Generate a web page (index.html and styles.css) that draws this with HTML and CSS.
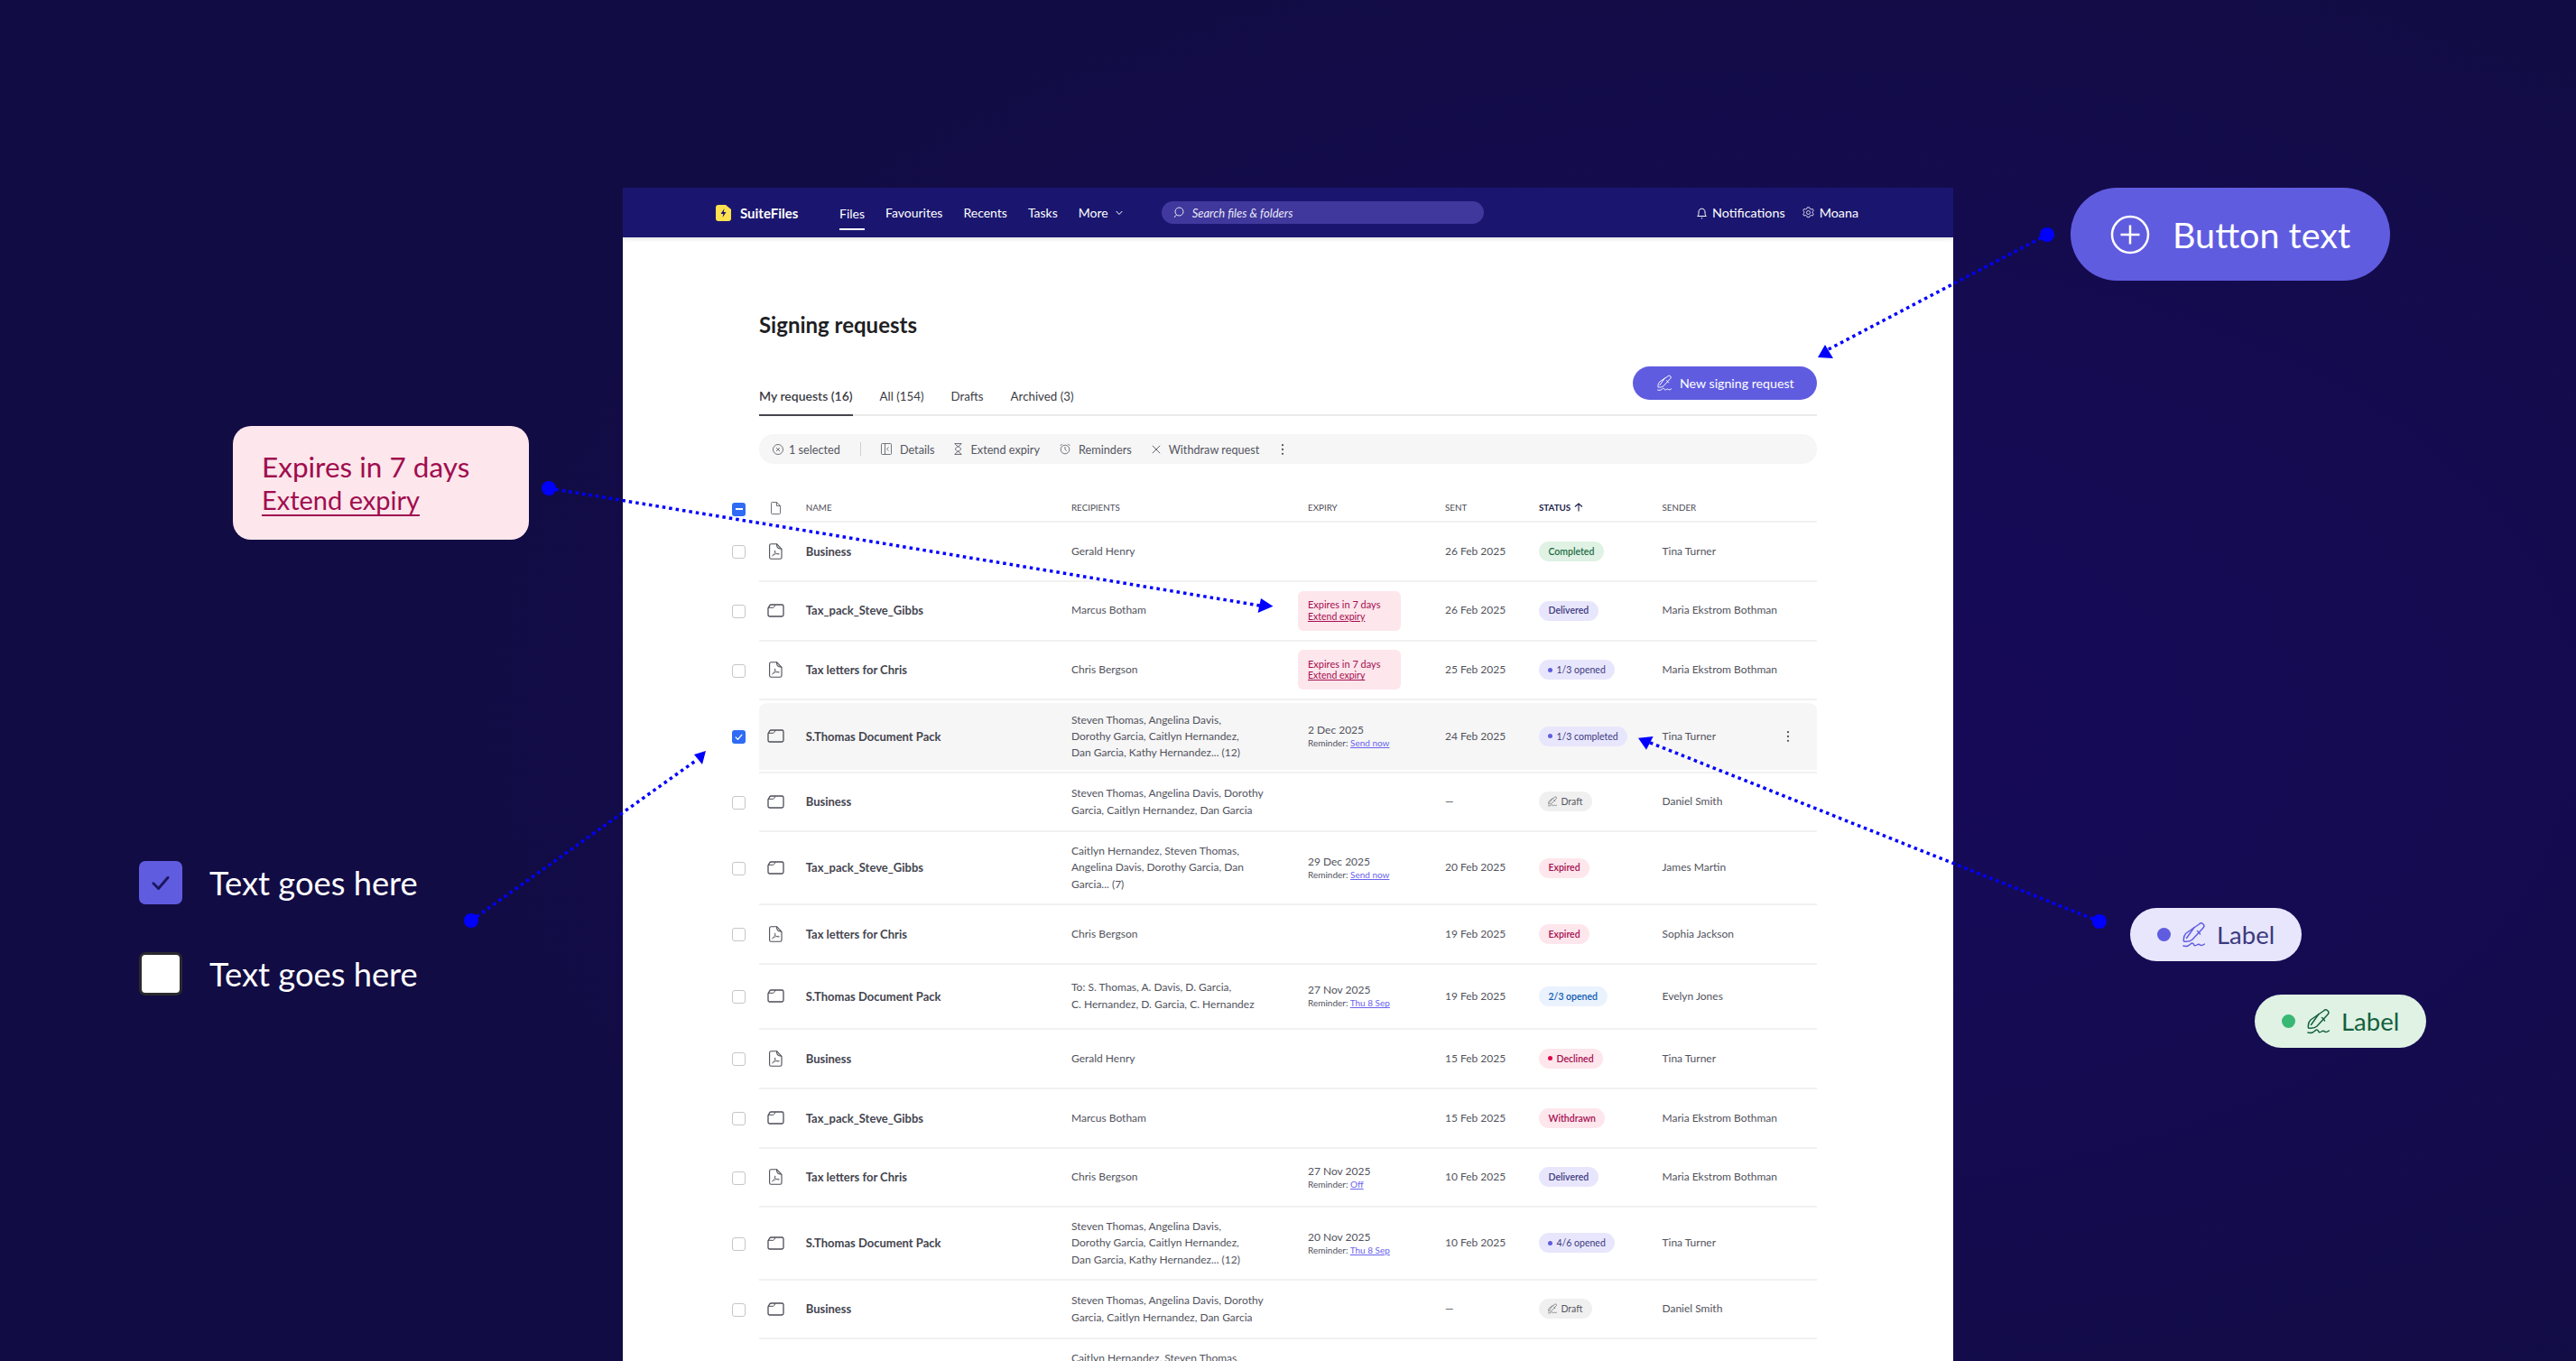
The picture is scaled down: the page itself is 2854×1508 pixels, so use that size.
FILE: index.html
```html
<!DOCTYPE html>
<html lang="en">
<head>
    <meta charset="UTF-8">
    <title>Signing requests</title>
    <link rel="stylesheet" href="styles.css">
</head>
<body>
    <svg class="icon-defs" width="0" height="0">
        <symbol id="i-sign" viewBox="0 0 25 28" fill="none" stroke="currentColor" stroke-width="1.500" stroke-linecap="round" stroke-linejoin="round">
            <path d="M18.500 2a3 3 0 0 1 4.500 4L11 19c-2 2-6 2.500-9.500 2-.5-3 .5-7 2.500-9z"/>
            <path d="M13 5.500 4.500 17.500M16.500 9.500c1.500 1 2.500 2 3 3.500"/>
            <path d="M1 26c3 1 6 0 8-2 1.500-1.500 3-1 3.500.5s2 1.500 3.500.5c1.500-1 2.500-1 3.500 0s3 .5 5-1"/>
        </symbol>
        <symbol id="i-folder" viewBox="0 0 19 15" fill="none" stroke="currentColor" stroke-width="1.300" stroke-linejoin="round">
            <path d="M1 4.800 2.900 1.700C3.200 1.200 3.700 1 4.300 1h11.900c1 0 1.800.8 1.800 1.800v9.400c0 1-.8 1.800-1.800 1.800H2.800c-1 0-1.800-.8-1.800-1.800z"/>
            <path d="M1.600 4.300h5c.5 0 .8-.2 1-.6L9 1.200" stroke-width="1"/>
        </symbol>
        <symbol id="i-pdf" viewBox="0 0 15 18" fill="none" stroke="currentColor" stroke-width="1.100" stroke-linejoin="round">
            <path d="M2.400 .7h6.100l5.500 5.600v9.200c0 1-.8 1.800-1.800 1.800H2.400c-1 0-1.800-.8-1.800-1.800V2.500c0-1 .8-1.800 1.800-1.800z"/>
            <path d="M8.500 .7c0 3.200.6 5.600 5.500 5.600"/>
            <path d="M3.500 14c1.500-.8 2.900-3 3.400-5.300.2-1.100-.6-1.100-.6-.1 0 1.900 2 3.500 4.400 3.600 1.100 0 .9-.9-.3-.9-1.900 0-4.900.9-6.900 2.700z" stroke-width=".7"/>
        </symbol>
        <symbol id="i-dots" viewBox="0 0 4 16" fill="currentColor">
            <circle cx="2" cy="2.500" r="1.300"/><circle cx="2" cy="8" r="1.300"/><circle cx="2" cy="13.500" r="1.300"/>
        </symbol>
        <symbol id="i-check" viewBox="0 0 16 16" fill="none" stroke="currentColor" stroke-width="1.800" stroke-linecap="round" stroke-linejoin="round">
            <path d="M3 8.500 6.500 12 13 4.500"/>
        </symbol>
    </svg>

    <div class="stage">
        <div class="app">
            <nav class="topbar">
                <a class="brand">
                    <svg class="brand-mark" viewBox="0 0 17 18"><path d="M3 0h8l6 5v10a3 3 0 0 1-3 3H3a3 3 0 0 1-3-3V3a3 3 0 0 1 3-3z" fill="#ffe14f"/><path d="M9.500 4 5.500 10h2.800L7.500 14l4-6H8.700z" fill="#1a1670"/></svg>
                    SuiteFiles
                </a>
                <div class="nav-links">
                    <a class="nav-link active">Files</a>
                    <a class="nav-link">Favourites</a>
                    <a class="nav-link">Recents</a>
                    <a class="nav-link">Tasks</a>
                    <a class="nav-link nav-more">More
                        <svg width="8" height="6" viewBox="0 0 8 6" fill="none" stroke="currentColor" stroke-width="1"><path d="M.7 1 4 4.500 7.300 1"/></svg>
                    </a>
                </div>
                <div class="search">
                    <svg width="12" height="13" viewBox="0 0 12 13" fill="none" stroke="currentColor" stroke-width="1"><circle cx="6.500" cy="5.500" r="4.500"/><path d="M3.500 9 1 12"/></svg>
                    <span>Search files &amp; folders</span>
                </div>
                <div class="nav-right">
                    <a class="nav-link nav-icon">
                        <svg width="11" height="14" viewBox="0 0 11 14" fill="none" stroke="currentColor" stroke-width="1"><path d="M.7 10.500c1-1 1.300-2 1.300-4.500 0-2.300 1.400-3.800 3.500-3.800S9 3.700 9 6c0 2.500.3 3.500 1.300 4.500z"/><path d="M4.800 12.800h1.400"/></svg>
                        Notifications
                    </a>
                    <a class="nav-link nav-icon">
                        <svg width="13" height="13" viewBox="0 0 13 13" fill="none" stroke="currentColor" stroke-width=".8"><circle cx="6.500" cy="6.500" r="2"/><path d="M5.300 .8h2.400l.5 1.500 1.500.7 1.500-.6 1.100 2-1.200 1.100v1.500l1.200 1.100-1.100 2-1.500-.6-1.500.7-.5 1.500H5.300l-.5-1.500-1.500-.7-1.500.6-1.100-2 1.200-1.100V5.500L.7 4.400l1.100-2 1.500.6 1.500-.7z"/></svg>
                        Moana
                    </a>
                </div>
            </nav>

            <main class="content">
                <h1 class="page-title">Signing requests</h1>

                <div class="tabs-row">
                    <div class="tabs">
                        <a class="tab active">My requests (16)</a>
                        <a class="tab">All (154)</a>
                        <a class="tab">Drafts</a>
                        <a class="tab">Archived (3)</a>
                    </div>
                    <button class="btn-primary">
                        <svg class="sign-icon" width="16" height="19"><use href="#i-sign"/></svg>
                        New signing request
                    </button>
                </div>

                <div class="toolbar">
                    <span class="tool tool-selected">
                        <svg width="12" height="12" viewBox="0 0 12 12" fill="none" stroke="currentColor" stroke-width=".8"><circle cx="6" cy="6" r="5.500"/><path d="M4 4l4 4M8 4 4 8"/></svg>
                        1 selected
                    </span>
                    <span class="tool-divider"></span>
                    <span class="tool">
                        <svg width="12" height="13" viewBox="0 0 12 13" fill="none" stroke="currentColor" stroke-width=".8"><rect x=".5" y=".5" width="11" height="12" rx="1"/><path d="M4.500 .5v12M8.500 4.500 6.500 6.500l2 2"/></svg>
                        Details
                    </span>
                    <span class="tool">
                        <svg width="9" height="13" viewBox="0 0 9 13" fill="none" stroke="currentColor" stroke-width=".9"><path d="M.5.600h8M.5 12.400h8M1.500.600c0 3 6 3.500 6 5.900s-6 2.900-6 5.900M7.500.600c0 3-6 3.500-6 5.900s6 2.900 6 5.900"/></svg>
                        Extend expiry
                    </span>
                    <span class="tool">
                        <svg width="12" height="13" viewBox="0 0 12 13" fill="none" stroke="currentColor" stroke-width=".8"><circle cx="6" cy="7" r="4.800"/><path d="M6 4v3l1.800 1.500M.6 3 2.800.8M11.400 3 9.200.8"/></svg>
                        Reminders
                    </span>
                    <span class="tool">
                        <svg width="10" height="10" viewBox="0 0 10 10" fill="none" stroke="currentColor" stroke-width=".9"><path d="M.8.800l8.400 8.400M9.200.800.8 9.200"/></svg>
                        Withdraw request
                    </span>
                    <svg class="tool-more" width="4" height="14"><use href="#i-dots"/></svg>
                </div>

                <div class="table">
                    <div class="row row-head">
                        <span class="check check-mixed"></span>
                        <div class="row-body">
                            <svg class="head-doc" width="11" height="14" viewBox="0 0 11 14" fill="none" stroke="currentColor" stroke-width=".8"><path d="M1.500.5h5l4 4v8a1 1 0 0 1-1 1h-8a1 1 0 0 1-1-1v-11a1 1 0 0 1 1-1zM6.500.5v4h4"/></svg>
                            <span>Name</span>
                            <span>Recipients</span>
                            <span>Expiry</span>
                            <span>Sent</span>
                            <span class="head-sorted">Status
                                <svg width="10" height="10" viewBox="0 0 10 10" fill="none" stroke="currentColor" stroke-width="1.100"><path d="M5 9.500V1M1 4.500 5 1l4 3.500"/></svg>
                            </span>
                            <span>Sender</span>
                        </div>
                    </div>

                    <div class="row">
                        <span class="check"></span>
                        <div class="row-body">
                            <svg class="file-icon pdf"><use href="#i-pdf"/></svg>
                            <span class="file-name">Business</span>
                            <span>Gerald Henry</span>
                            <span></span>
                            <span>26 Feb 2025</span>
                            <span><span class="pill pill-green">Completed</span></span>
                            <span>Tina Turner</span>
                        </div>
                    </div>

                    <div class="row">
                        <span class="check"></span>
                        <div class="row-body">
                            <svg class="file-icon"><use href="#i-folder"/></svg>
                            <span class="file-name">Tax_pack_Steve_Gibbs</span>
                            <span>Marcus Botham</span>
                            <span class="expiry-alert">Expires in 7 days<a>Extend expiry</a></span>
                            <span>26 Feb 2025</span>
                            <span><span class="pill pill-purple">Delivered</span></span>
                            <span>Maria Ekstrom Bothman</span>
                        </div>
                    </div>

                    <div class="row">
                        <span class="check"></span>
                        <div class="row-body">
                            <svg class="file-icon pdf"><use href="#i-pdf"/></svg>
                            <span class="file-name">Tax letters for Chris</span>
                            <span>Chris Bergson</span>
                            <span class="expiry-alert">Expires in 7 days<a>Extend expiry</a></span>
                            <span>25 Feb 2025</span>
                            <span><span class="pill pill-purple pill-light"><i class="dot"></i>1/3 opened</span></span>
                            <span>Maria Ekstrom Bothman</span>
                        </div>
                    </div>

                    <div class="row row-tall row-selected">
                        <span class="check check-on"><svg width="11" height="11"><use href="#i-check"/></svg></span>
                        <div class="row-body">
                            <svg class="file-icon"><use href="#i-folder"/></svg>
                            <span class="file-name">S.Thomas Document Pack</span>
                            <span>Steven Thomas, Angelina Davis,<br>Dorothy Garcia, Caitlyn Hernandez,<br>Dan Garcia, Kathy Hernandez... (12)</span>
                            <span class="expiry">2 Dec 2025<small>Reminder: <a>Send now</a></small></span>
                            <span>24 Feb 2025</span>
                            <span><span class="pill pill-purple pill-light"><i class="dot"></i>1/3 completed</span></span>
                            <span class="sender-menu">Tina Turner<svg width="4" height="14"><use href="#i-dots"/></svg></span>
                        </div>
                    </div>

                    <div class="row">
                        <span class="check"></span>
                        <div class="row-body">
                            <svg class="file-icon"><use href="#i-folder"/></svg>
                            <span class="file-name">Business</span>
                            <span>Steven Thomas, Angelina Davis, Dorothy<br>Garcia, Caitlyn Hernandez, Dan Garcia</span>
                            <span></span>
                            <span>—</span>
                            <span><span class="pill pill-grey"><svg class="sign-icon" width="10" height="12"><use href="#i-sign"/></svg>Draft</span></span>
                            <span>Daniel Smith</span>
                        </div>
                    </div>

                    <div class="row row-tall">
                        <span class="check"></span>
                        <div class="row-body">
                            <svg class="file-icon"><use href="#i-folder"/></svg>
                            <span class="file-name">Tax_pack_Steve_Gibbs</span>
                            <span>Caitlyn Hernandez, Steven Thomas,<br>Angelina Davis, Dorothy Garcia, Dan<br>Garcia... (7)</span>
                            <span class="expiry">29 Dec 2025<small>Reminder: <a>Send now</a></small></span>
                            <span>20 Feb 2025</span>
                            <span><span class="pill pill-red">Expired</span></span>
                            <span>James Martin</span>
                        </div>
                    </div>

                    <div class="row">
                        <span class="check"></span>
                        <div class="row-body">
                            <svg class="file-icon pdf"><use href="#i-pdf"/></svg>
                            <span class="file-name">Tax letters for Chris</span>
                            <span>Chris Bergson</span>
                            <span></span>
                            <span>19 Feb 2025</span>
                            <span><span class="pill pill-red">Expired</span></span>
                            <span>Sophia Jackson</span>
                        </div>
                    </div>

                    <div class="row row-mid">
                        <span class="check"></span>
                        <div class="row-body">
                            <svg class="file-icon"><use href="#i-folder"/></svg>
                            <span class="file-name">S.Thomas Document Pack</span>
                            <span>To: S. Thomas, A. Davis, D. Garcia,<br>C. Hernandez, D. Garcia, C. Hernandez</span>
                            <span class="expiry">27 Nov 2025<small>Reminder: <a>Thu 8 Sep</a></small></span>
                            <span>19 Feb 2025</span>
                            <span><span class="pill pill-blue">2/3 opened</span></span>
                            <span>Evelyn Jones</span>
                        </div>
                    </div>

                    <div class="row">
                        <span class="check"></span>
                        <div class="row-body">
                            <svg class="file-icon pdf"><use href="#i-pdf"/></svg>
                            <span class="file-name">Business</span>
                            <span>Gerald Henry</span>
                            <span></span>
                            <span>15 Feb 2025</span>
                            <span><span class="pill pill-red"><i class="dot"></i>Declined</span></span>
                            <span>Tina Turner</span>
                        </div>
                    </div>

                    <div class="row">
                        <span class="check"></span>
                        <div class="row-body">
                            <svg class="file-icon"><use href="#i-folder"/></svg>
                            <span class="file-name">Tax_pack_Steve_Gibbs</span>
                            <span>Marcus Botham</span>
                            <span></span>
                            <span>15 Feb 2025</span>
                            <span><span class="pill pill-red">Withdrawn</span></span>
                            <span>Maria Ekstrom Bothman</span>
                        </div>
                    </div>

                    <div class="row">
                        <span class="check"></span>
                        <div class="row-body">
                            <svg class="file-icon pdf"><use href="#i-pdf"/></svg>
                            <span class="file-name">Tax letters for Chris</span>
                            <span>Chris Bergson</span>
                            <span class="expiry">27 Nov 2025<small>Reminder: <a>Off</a></small></span>
                            <span>10 Feb 2025</span>
                            <span><span class="pill pill-purple">Delivered</span></span>
                            <span>Maria Ekstrom Bothman</span>
                        </div>
                    </div>

                    <div class="row row-tall">
                        <span class="check"></span>
                        <div class="row-body">
                            <svg class="file-icon"><use href="#i-folder"/></svg>
                            <span class="file-name">S.Thomas Document Pack</span>
                            <span>Steven Thomas, Angelina Davis,<br>Dorothy Garcia, Caitlyn Hernandez,<br>Dan Garcia, Kathy Hernandez... (12)</span>
                            <span class="expiry">20 Nov 2025<small>Reminder: <a>Thu 8 Sep</a></small></span>
                            <span>10 Feb 2025</span>
                            <span><span class="pill pill-purple pill-light"><i class="dot"></i>4/6 opened</span></span>
                            <span>Tina Turner</span>
                        </div>
                    </div>

                    <div class="row">
                        <span class="check"></span>
                        <div class="row-body">
                            <svg class="file-icon"><use href="#i-folder"/></svg>
                            <span class="file-name">Business</span>
                            <span>Steven Thomas, Angelina Davis, Dorothy<br>Garcia, Caitlyn Hernandez, Dan Garcia</span>
                            <span></span>
                            <span>—</span>
                            <span><span class="pill pill-grey"><svg class="sign-icon" width="10" height="12"><use href="#i-sign"/></svg>Draft</span></span>
                            <span>Daniel Smith</span>
                        </div>
                    </div>

                    <div class="row row-tall">
                        <span class="check"></span>
                        <div class="row-body">
                            <svg class="file-icon"><use href="#i-folder"/></svg>
                            <span class="file-name">Tax_pack_Steve_Gibbs</span>
                            <span>Caitlyn Hernandez, Steven Thomas,<br>Angelina Davis, Dorothy Garcia, Dan<br>Garcia... (7)</span>
                            <span class="expiry">29 Dec 2025<small>Reminder: <a>Send now</a></small></span>
                            <span>20 Feb 2025</span>
                            <span><span class="pill pill-red">Expired</span></span>
                            <span>James Martin</span>
                        </div>
                    </div>
                </div>
            </main>
        </div>

        <!-- callouts around the app window -->
        <div class="callout callout-alert">
            <span>Expires in 7 days</span>
            <a>Extend expiry</a>
        </div>

        <div class="callout callout-checks">
            <div class="check-line">
                <span class="big-check big-check-on"><svg width="26" height="26" viewBox="0 0 16 16"><use href="#i-check"/></svg></span>
                Text goes here
            </div>
            <div class="check-line">
                <span class="big-check"></span>
                Text goes here
            </div>
        </div>

        <div class="callout callout-button">
            <svg width="44" height="44" viewBox="0 0 44 44" fill="none" stroke="currentColor" stroke-width="2.500"><circle cx="22" cy="22" r="20"/><path d="M22 11.500v21M11.500 22h21"/></svg>
            Button text
        </div>

        <div class="callout big-pill big-pill-purple">
            <i class="big-dot"></i>
            <svg width="25" height="28"><use href="#i-sign"/></svg>
            Label
        </div>

        <div class="callout big-pill big-pill-green">
            <i class="big-dot"></i>
            <svg width="25" height="28"><use href="#i-sign"/></svg>
            Label
        </div>

        <svg class="arrows" width="2854" height="1508" viewBox="0 0 2854 1508">
            <g fill="none" stroke="#0000ff" stroke-width="3.500" stroke-dasharray="3.500 4">
                <path d="M2268 260 2024 388"/>
                <path d="M608 541 1396 671"/>
                <path d="M2326 1021 1826 822"/>
                <path d="M522 1020 772 842"/>
            </g>
            <g fill="#0000ff">
                <circle cx="2268" cy="260" r="8"/>
                <circle cx="608" cy="541" r="8"/>
                <circle cx="2326" cy="1021" r="8"/>
                <circle cx="522" cy="1020" r="8"/>
                <polygon points="2022,382 2014,396 2031,397"/>
                <polygon points="1397,663 1410.500,671.700 1393.600,679"/>
                <polygon points="1815,817.700 1831.600,816 1824,830.700"/>
                <polygon points="782,832 769,836 778,847"/>
            </g>
        </svg>
    </div>
</body>
</html>
```

FILE: styles.css
```css
* {
    box-sizing: border-box;
}

body {
    margin: 0;
    font-family: "Lato", "Liberation Sans", sans-serif;
    background-color: #130c4c;
}

.icon-defs {
    position: absolute;
}

.stage {
    position: relative;
    width: 2854px;
    height: 1508px;
    padding: 208px 690px 0;
    overflow: hidden;
    background: radial-gradient(ellipse 1500px 900px at 2000px 800px, #170a5a 0%, #140b50 55%, #120c44 100%);
}

.app {
    height: 1300px;
    overflow: hidden;
    background-color: #ffffff;
}

/* top nav */
.topbar {
    display: flex;
    align-items: center;
    height: 55px;
    padding: 0 105px 0 103px;
    color: #ffffff;
    background-color: #1a1670;
    box-shadow: 0 2px 4px rgba(0, 0, 0, 0.12);
    position: relative;
}

.brand {
    display: flex;
    align-items: center;
    gap: 10px;
    width: 137px;
    font-size: 15px;
    font-weight: 700;
}

.brand-mark {
    width: 17px;
    height: 18px;
}

.nav-links {
    display: flex;
    gap: 23px;
    height: 100%;
}

.nav-link {
    display: flex;
    align-items: center;
    font-size: 14px;
    color: #ffffff;
}

.nav-links .active {
    border-bottom: 2px solid #ffffff;
    height: 39px;
    margin-top: 8px;
    padding-top: 3px;
}

.nav-more {
    gap: 8px;
}

.search {
    display: flex;
    align-items: center;
    gap: 9px;
    width: 357px;
    height: 25px;
    margin-left: 43px;
    padding-left: 13px;
    border-radius: 13px;
    font-size: 13px;
    font-style: italic;
    background-color: #40389c;
    color: #e9e8f8;
}

.nav-right {
    display: flex;
    gap: 19px;
    margin-left: auto;
}

.nav-right .nav-link {
    font-size: 14.300px;
}

.nav-icon {
    gap: 6px;
}

/* page content */
.content {
    padding: 82px 151px 0 151px;
}

.page-title {
    margin: 0;
    font-size: 24px;
    line-height: 30px;
    font-weight: 700;
    color: #1f1f24;
}

.tabs-row {
    display: flex;
    justify-content: space-between;
    align-items: flex-start;
    height: 55px;
    margin-top: 31px;
    border-bottom: 2px solid #ebebeb;
}

.tabs {
    display: flex;
    gap: 30px;
    align-self: flex-end;
    margin-bottom: -2px;
}

.tab {
    padding-bottom: 11px;
    border-bottom: 2px solid transparent;
    font-size: 13.300px;
    line-height: 18px;
    color: #3b3c45;
}

.tab.active {
    font-size: 14px;
    font-weight: 600;
    border-bottom-color: #44454d;
}

.btn-primary {
    display: flex;
    align-items: center;
    gap: 9px;
    width: 204px;
    height: 37px;
    padding: 0 0 0 27px;
    border: 0;
    border-radius: 19px;
    font-family: inherit;
    font-size: 14.200px;
    color: #ffffff;
    background-color: #605ce0;
}

.toolbar {
    display: flex;
    align-items: center;
    gap: 22px;
    height: 33px;
    margin-top: 20px;
    padding-left: 15px;
    border-radius: 16px;
    font-size: 12.700px;
    color: #54555f;
    background-color: #f6f6f6;
}

.tool {
    display: flex;
    align-items: center;
    gap: 9px;
}

.tool-selected {
    gap: 6px;
}

.tool-divider {
    width: 1px;
    height: 15px;
    background-color: #cfcfcf;
}

.tool-more {
    margin-left: 2px;
    color: #54555f;
}

/* table */
.table {
    margin-top: 35px;
}

.row {
    display: flex;
    align-items: center;
    height: 65.750px;
    margin-left: -30px;
}

.row-tall {
    height: 80.400px;
}

.row-mid {
    height: 72.500px;
}

.row-body {
    display: grid;
    grid-template-columns: 51.700px 294.300px 262px 152px 104px 136.500px 1fr;
    align-items: center;
    flex: 1;
    height: 100%;
    border-bottom: 2px solid #f1f1f1;
    font-size: 12px;
    line-height: 18.300px;
    color: #52535d;
}

.row-head {
    height: 30px;
}

.row-head .row-body {
    font-size: 9.800px;
    text-transform: uppercase;
    color: #4b4c56;
    padding-bottom: 1px;
}

.head-doc {
    margin-left: 13px;
}

.head-sorted {
    display: flex;
    align-items: center;
    gap: 4px;
    font-weight: 700;
    color: #1b1d4a;
}

.check {
    display: flex;
    align-items: center;
    justify-content: center;
    flex: none;
    width: 15px;
    height: 15px;
    margin-right: 15px;
    border: 1.500px solid #c6c6ca;
    border-radius: 3px;
    background-color: #ffffff;
}

.check-on {
    border: 0;
    color: #ffffff;
    background-color: #2f6bf5;
}

.check-mixed {
    border: 0;
    background-color: #2f6bf5;
    position: relative;
}

.check-mixed::after {
    content: "";
    width: 8px;
    height: 2px;
    background-color: #ffffff;
}

.file-icon {
    width: 19px;
    height: 15px;
    margin-left: 9px;
    color: #4d4e58;
}

.file-icon.pdf {
    width: 15px;
    height: 18px;
    margin-left: 11px;
}

.file-name {
    font-size: 13px;
    font-weight: 700;
    color: #44454f;
}

.row-selected .row-body {
    padding: 3px 0 2px;
    background: #f6f6f6 content-box;
    border-radius: 10px;
    border-bottom-left-radius: 0;
    border-bottom-right-radius: 0;
}

.sender-menu {
    display: flex;
    align-items: center;
    justify-content: space-between;
    padding-right: 30px;
    color: #52535d;
}

.expiry {
    display: flex;
    flex-direction: column;
    line-height: 15px;
}

.expiry small {
    font-size: 10px;
    line-height: 14px;
}

.expiry a {
    color: #6a63ee;
    text-decoration: underline;
}

.expiry-alert {
    display: flex;
    flex-direction: column;
    justify-content: center;
    width: 114px;
    height: 44px;
    margin-left: -11px;
    padding-left: 11px;
    border-radius: 6px;
    font-size: 11px;
    line-height: 13.500px;
    color: #a60d50;
    background-color: #fde6ec;
}

.expiry-alert a {
    font-size: 10.500px;
    text-decoration: underline;
}

.pill {
    display: inline-flex;
    align-items: center;
    gap: 4px;
    height: 22px;
    padding: 0 10.500px;
    border-radius: 11px;
    font-size: 10.500px;
    font-weight: 600;
}

.dot {
    width: 5px;
    height: 5px;
    border-radius: 50%;
    background-color: currentColor;
}

.pill-green {
    color: #1f6b45;
    background-color: #dff2e4;
}

.pill-purple {
    color: #3c3a80;
    background-color: #e8e6fc;
}

.pill-purple .dot {
    background-color: #605ce0;
}

.pill-light {
    font-weight: 400;
}

.pill-red {
    color: #a60d50;
    background-color: #fde6ec;
}

.pill-red .dot {
    background-color: #e0004d;
}

.pill-blue {
    color: #0c5ab0;
    background-color: #e9f2fd;
}

.pill-grey {
    font-weight: 400;
    color: #55565f;
    background-color: #f0f0f0;
}

/* callouts */
.callout {
    position: absolute;
}

.callout-alert {
    left: 258px;
    top: 472px;
    display: flex;
    flex-direction: column;
    width: 328px;
    height: 126px;
    padding: 27px 0 0 32px;
    border-radius: 20px;
    font-size: 31.500px;
    line-height: 36.500px;
    color: #a00d4e;
    background-color: #fde6ec;
}

.callout-alert a {
    font-size: 29px;
    text-decoration: underline;
    text-underline-offset: 5px;
    text-decoration-thickness: 2px;
}

.callout-checks {
    left: 154px;
    top: 954px;
    display: flex;
    flex-direction: column;
    gap: 53px;
    font-size: 36.300px;
    color: #ffffff;
}

.check-line {
    display: flex;
    align-items: center;
    gap: 30px;
    height: 48px;
}

.big-check {
    display: flex;
    align-items: center;
    justify-content: center;
    width: 48px;
    height: 48px;
    border: 3px solid #2a2a2e;
    border-radius: 7px;
    background-color: #ffffff;
}

.big-check-on {
    border: 0;
    color: #1c1660;
    background-color: #605ce0;
}

.callout-button {
    left: 2294px;
    top: 208px;
    display: flex;
    align-items: center;
    gap: 25px;
    width: 354px;
    height: 103px;
    padding-left: 44px;
    border-radius: 52px;
    font-size: 39.500px;
    color: #ffffff;
    background-color: #605ce0;
}

.big-pill {
    display: flex;
    align-items: center;
    width: 190px;
    height: 59px;
    padding-left: 30px;
    border-radius: 30px;
    font-size: 27.500px;
}

.big-pill svg {
    margin: 0 13px 0 13px;
}

.big-dot {
    width: 15px;
    height: 15px;
    border-radius: 50%;
    background-color: currentColor;
}

.big-pill-purple {
    left: 2360px;
    top: 1006px;
    color: #3c3a80;
    background-color: #e8e6fc;
}

.big-pill-purple .big-dot, .big-pill-purple svg {
    color: #605ce0;
}

.big-pill-green {
    left: 2498px;
    top: 1102px;
    color: #14603c;
    background-color: #dff2e4;
}

.big-pill-green .big-dot {
    color: #38b873;
}

.arrows {
    position: absolute;
    left: 0;
    top: 0;
    pointer-events: none;
}
```
